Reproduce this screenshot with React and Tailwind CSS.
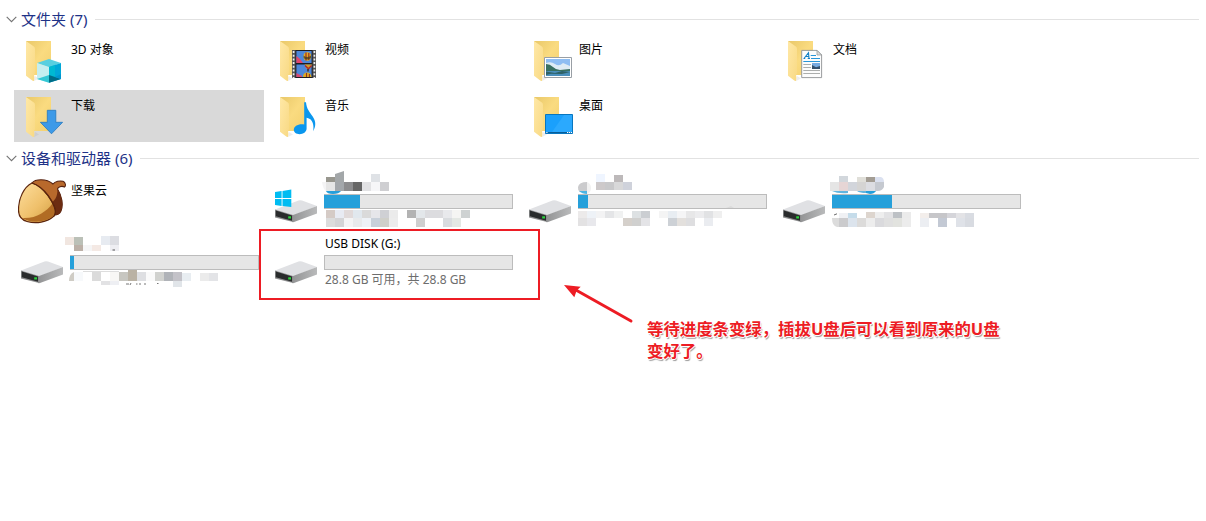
import React from "react";

const FONT = "font-['Noto_Sans','Noto_Sans_CJK_SC',sans-serif]";

function Folder({ id }) {
  return (
    <g>
      <defs>
        <linearGradient id={`b${id}`} x1="0" y1="0" x2="1" y2="1">
          <stop offset="0" stopColor="#e9c869" />
          <stop offset="0.5" stopColor="#fadb80" />
          <stop offset="1" stopColor="#f3d06f" />
        </linearGradient>
        <linearGradient id={`f${id}`} x1="0" y1="0" x2="1" y2="1">
          <stop offset="0" stopColor="#ffe8a6" />
          <stop offset="1" stopColor="#f8d984" />
        </linearGradient>
      </defs>
      <path d="M8 5H33V39H14Z" fill={`url(#b${id})`} />
      <path d="M17 40L21 42.5L16 45Z" fill="#999" opacity=".18" />
      <path d="M8 5L15.5 10.2Q17 11 17 13V37Q15.6 38.5 16.4 42L16 45Q15 45.3 13.6 44L8 39.7Z" fill={`url(#f${id})`} />
    </g>
  );
}

const overlays = {
  cube: (
    <g>
      <path d="M31 23L43 27L31 31.5L19 27Z" fill="#58cfe0" />
      <path d="M19 27L31 31V46.7L19 43Z" fill="#c5eef0" />
      <path d="M31 31L43 27V43L31 46.7Z" fill="#00a7d8" />
      <path d="M31 31L37 29V42H31Z" fill="#00b9d2" />
      <path d="M19 43L31 39V46.7Z" fill="#35c8d5" />
      <path d="M31 39L43 43L31 46.7Z" fill="#006d87" />
      <path d="M37 41L43 38V43Z" fill="#0095cf" />
    </g>
  ),
  down: (
    <path d="M29.3 18.3H37.8V30.3H44.6L33.5 41.8L22.4 30.3H29.3Z" fill="#3d9ae8" stroke="#2478bf" strokeWidth=".8" />
  ),
  film: (
    <g>
      <path d="M20 14H44V42H20Z" fill="#555" />
      <path d="M21.6 15V42M42.4 15V42" stroke="#eee" strokeWidth="1.7" strokeDasharray="2 1.7" />
      <path d="M23.4 14H40.6V42H23.4Z" fill="#1d1d22" />
      <path d="M24.4 15H39.6V27H24.4ZM24.4 28.5H39.6V41H24.4Z" fill="#4d87da" />
      <path d="M24.4 20L28 23L31 27H24.4Z" fill="#e2476b" />
      <path d="M24.4 37L30 40V41H24.4Z" fill="#d84970" />
      <ellipse cx="35.3" cy="20.5" rx="3.8" ry="4.2" fill="#e2ad22" />
      <path d="M34 16.5V24.5M36.8 17V24" stroke="#9b2d2d" strokeWidth="1.2" />
      <path d="M31.5 19.5Q35 22.5 39 19.5V22Q35 25 31.7 22Z" fill="#443b22" opacity=".75" />
      <path d="M32.5 28.5H40.3L37.5 33H34.8Z" fill="#d5a023" />
      <path d="M33 29.5L36.5 32.8L39.6 29.5" stroke="#a8282e" strokeWidth="1.3" fill="none" />
      <path d="M36 33V35.5" stroke="#492f2a" strokeWidth="1.6" />
      <path d="M31 41Q31 36.5 35 36.5T39.6 41Z" fill="#deaa1f" />
      <path d="M34.5 37V41M37.4 38V41" stroke="#8f352b" strokeWidth="1.1" />
    </g>
  ),
  music: (
    <path d="M32.2 10.3H34C34.5 17 38 20.5 40.7 24.5C44.2 29.6 43.9 34.3 41.2 39.2C42 34 41.5 27 34.6 25.8V36.5C34.6 40 31.2 42.2 27.6 42.2C24.2 42.2 21.8 40.5 21.8 37.8C21.8 34.3 26.4 31.5 32.2 32.5Z" fill="#0a97ee" />
  ),
  picture: (
    <g>
      <path d="M18.5 21.5H45.5V41.5H18.5Z" fill="#fff" stroke="#999fa5" />
      <path d="M20 23H44V40H20Z" fill="#8ebdf2" />
      <path d="M20 27Q25 25 29 28T37 27L44 30V34H20Z" fill="#deebf4" />
      <path d="M20 28Q24 28 27 31T34 34L44 33V36H20Z" fill="#397061" />
      <path d="M20 35H44V40H20Z" fill="#4b8fbb" />
      <path d="M20 35.5L29 37L36 35L44 36L36 38L25 37.8L20 39Z" fill="#2e6267" />
    </g>
  ),
  desktop: (
    <g>
      <path d="M19.5 22.5H46.5V41.5H19.5Z" fill="#1aa0fc" stroke="#0876bf" />
      <path d="M38 23H46V40H26Z" fill="#3bb1ff" opacity=".5" />
      <path d="M20 40.5H46" stroke="#075d99" />
      <path d="M20.3 40.5H21.5M41 40.5H42.3M43 40.5H44.3M45 40.5H46" stroke="#fff" />
    </g>
  ),
  document: (
    <g>
      <path d="M21.7 14.4H37L41.6 19V41.6H21.7Z" fill="#fcfcfc" stroke="#8e9294" strokeWidth=".9" />
      <path d="M37 14.4V19H41.6Z" fill="#dedede" stroke="#8e9294" strokeWidth=".7" />
      <path d="M24 22.5L28.5 16.7L29 22.5M26 20.5H29M23.5 22.5H25.2M27.7 22.5H30" stroke="#1582c7" fill="none" strokeWidth="1.1" />
      <path d="M30.7 19.5H36M31 22.5H40M23.3 25.5H40" stroke="#2795d8" />
      <path d="M23.3 28.5H31M23.3 31.5H31M23.3 34.5H40M23.3 37.5H40" stroke="#acaead" />
      <path d="M32 27H40V33H32Z" fill="#77aae0" />
      <path d="M32 29L36 31.2L40 30V33H32Z" fill="#33506c" />
    </g>
  ),
};

function FolderIcon({ kind }) {
  return (
    <svg viewBox="0 0 48 48" className="h-12 w-12 shrink-0">
      <Folder id={kind} />
      {overlays[kind]}
    </svg>
  );
}

function Acorn() {
  return (
    <svg viewBox="0 0 48 48" className="h-12 w-12 shrink-0">
      <defs>
        <linearGradient id="nut" x1="0" y1="0" x2="1" y2="1">
          <stop offset="0.1" stopColor="#fbd995" />
          <stop offset="0.55" stopColor="#efc06b" />
          <stop offset="1" stopColor="#cf9a3e" />
        </linearGradient>
      </defs>
      <path d="M14 4C17 0 28-1 35 5C37 2.500 42 1.300 45 2.300C47.800 3.500 48 7 46.500 8C43.500 6.600 40 8 39.500 10C44 17 45.500 26 43 32C41 36 38.500 36 36.500 36Z" fill="#b8692c" stroke="#54200f" strokeWidth="1.1" />
      <path d="M39.5 10C44 17 45.500 26 43 32C41.500 35.500 39 36 37 35.500C38 31 36 27 34.500 23C38 20 39.500 16 39.500 10Z" fill="#6c2c11" />
      <path d="M14 4C6 8 .5 19 .5 31C.5 38 4 41 9 42.500C18 45 29 43.500 36 37C39.500 33 35.500 24 30 16.500C25.500 10.500 20 6 14 4Z" fill="url(#nut)" stroke="#5c250d" strokeWidth="1.2" />
      <path d="M4 39C18 40 28 33 34.500 24.500C37.500 31 37.500 35 34 38C26 44 12 44 4 39Z" fill="#b16c24" />
      <path d="M14 4C20 6 25.500 10.500 30 16.500C35.500 24 39.500 33 36 37" fill="none" stroke="#5c250d" strokeWidth="1.3" />
    </svg>
  );
}

function DriveIcon({ id, windows }) {
  return (
    <svg viewBox="0 0 48 48" className="h-12 w-12 shrink-0">
      <defs>
        <linearGradient id={`s${id}`} x1="0" y1="0" x2="1" y2="0">
          <stop offset="0" stopColor="#929394" />
          <stop offset="1" stopColor="#b9babb" />
        </linearGradient>
      </defs>
      <path d="M3 30.500L26.500 21.500Q28 21 30 21.500L45 27L21 36.500Z" fill="#e0e1e4" />
      <path d="M21 36L45 27V34.500L22 43Q21 43.300 20 43Z" fill={`url(#s${id})`} />
      <path d="M3 30.500L21 36V43L3 38.500Z" fill="#8c8d8e" />
      <path d="M3.8 31.500L20 36.500V41.700L3.800 37.300Z" fill="#292b2c" />
      <path d="M16.200 37.300H19V39.500H16.200Z" fill="#2bd43c" />
      {windows && (
        <path d="M3 13L9.600 12V19H3ZM10.500 11.900L19.300 10.600V19H10.500ZM3 20H9.600V27L3 26ZM10.500 20H19.300V28L10.500 27Z" fill="#00bcf2" />
      )}
    </svg>
  );
}

/* Row format: [top, bottom, left, colours for consecutive 9px cells]; null leaves a cell clear. */
const mosaics = {
  c: {
    rows: [
      [1, 9, 67, ["#a3a7a9"]],
      [4, 9, 58, ["#98978f"]],
      [1, 9, 103, ["#dfe2e6"]],
      [9, 18, 58, ["#e6e6e6", "#a3a7ab", "#8c8c8e", "#666666", "#e2e2e4", "#f6f6f8", "#cfcfd2"]],
      [37, 45, 58, ["#d5cbc6", "#e8ebf3", "#e1dada", "#e1e8ee", "#dadada", "#e6e6ea", "#cfd0d4", "#ebebeb", null, "#b3b3b3", "#e3e7ea", "#dcdcdf", "#dcdcdf", "#e8e9ec", "#f5f5f3", "#ced2d2"]],
      [45, 54, 58, ["#dcdcdc", "#d4d4d6", "#f4f4f5", "#e8eaec", "#eef2f7", "#c8d0da", "#cfcfc9", "#ececec", null, null, "#cfcfcf", null, null, "#d9dcdf", "#e4e8e4"]],
    ],
    extra: (
      <g>
        <path d="M58 18H73Q71 21 65 21T58 18Z" fill="#259fdb" />
        <path d="M54 9H58V18Q55 16 54 9Z" fill="#f4f4f5" />
        <path d="M67 4V1L76-2V4Z" fill="#a3a7a9" />
      </g>
    ),
  },
  d: {
    rows: [
      [1, 9, 74, ["#eff5ff"]],
      [2, 9, 92, ["#bdb9ba"]],
      [9, 17, 74, ["#cdc9ca", "#c8c8ca", "#d8d8d9", "#cfd2db"]],
      [38, 45, 56, ["#eceaea", "#eef2f7", "#f3f3f4", "#e4e5e7", "#f0f1f1", null, "#dde1e3", "#cbced2", null, "#f4f4f4", "#e8edf2", "#f5f5f6", "#e7e7e8", "#ececee", "#e1e2e4", "#efefef"]],
      [45, 53, 56, ["#e3e2e3", "#e8e8ec", null, null, null, "#d5d0cb", "#d0d0cf", "#e4e4e7", null, null, "#cdd1d6", "#e3e0dd", "#dedee0", null, "#eaecf0"]],
    ],
    extra: (
      <g>
        <path d="M65 9A6.500 6.500 0 0 1 65 21Z" fill="#f1f1f1" />
        <path d="M65 9V19H58Q55.500 17 56 14Q57 9 65 9Z" fill="#cbcbcd" />
        <path d="M57 18H65V21Q60 21 57 18Z" fill="#4ab4e4" />
        <path d="M204 35H212L209 33Z" fill="#dadada" />
      </g>
    ),
  },
  e: {
    rows: [
      [3, 9, 63, ["#d2d7dc"]],
      [4, 9, 81, ["#e0dfd9", "#a39d94"]],
      [9, 18, 54, ["#e5e5e5", "#e6d5d5", "#d2d5db", "#d5d4d3", "#dcdde2"]],
      [40, 45, 63, ["#f0f1f4", "#c5dcea"]],
      [39, 45, 90, ["#ddd5ce", "#eeeeee", "#e2e2e4", "#bdc1c5", "#ebebeb"]],
      [40, 45, 144, ["#f3eeeb", "#c6c6c9", "#c6c6c9", "#d5d5da", "#e3e3e6", "#d9dce2"]],
      [45, 54, 63, ["#cbcbcd", "#dce4ed", "#dcdbda", "#ededed", "#dadadd", "#e0e0e0", "#e2e3df", "#ececec", null, "#eceef2", null, "#c3c9d4", null, "#dfe2e8", "#d8dbe1"]],
    ],
    extra: (
      <g>
        <path d="M99 4H105Q108 5 108 9H99Z" fill="#dbe1f0" />
        <path d="M99 9H108V14Q106 18 102 18H99Z" fill="#c5c9d0" />
        <path d="M56 18H72V20Q62 21 56 18Z" fill="#62b5df" />
        <path d="M81 18H90V20Q84 20 81 18Z" fill="#62b5df" />
        <path d="M90 18H100Q98 21 94 21L90 20Z" fill="#259fdb" />
        <path d="M63 45V54H61Q56 53 56 45Z" fill="#dcdcdc" />
        <path d="M58 42L61 40.800" stroke="#444" strokeWidth=".8" />
      </g>
    ),
  },
  f: {
    rows: [
      [3, 11, 51, ["#f1e6e0", "#bbc0b7"]],
      [2, 11, 87, ["#e7ebf1", "#dcdde2"]],
      [11, 17, 60, ["#bcb0a7", "#f5f5f6", "#f4e9e4", null, "#eeeef2"]],
      [38, 47, 60, ["#f7f9fb", null, "#dbdbdb", null, "#f8f7f5", "#c7c6c0", null, "#dedfe2", "#fafafa", "#d1d2cf", "#b0b3b8", "#c3c2c8"]],
      [36, 47, 114, ["#bab2a4"]],
      [39, 47, 168, ["#e8edf1", null, "#ebebeb", "#e3e4e7"]],
      [47, 51, 87, ["#e2e2e4", "#eeeff3"]],
      [47, 53, 159, ["#e1e5e9"]],
    ],
    extra: (
      <g>
        <path d="M60 38V47H55Q55 40 60 38Z" fill="#cfccc5" />
        <path d="M69 37.500H105" stroke="#ddd" />
        <path d="M98.500 16H101" stroke="#555" />
        <path d="M112 50H115M117 49L116 51M122 50H123.500M126 49V51M130 50H132M143 49.500H144.500" stroke="#777" />
      </g>
    ),
  },
};

function Mosaic({ name }) {
  const { rows, extra } = mosaics[name];
  return (
    <svg width="250" height="57" className="absolute left-0 top-0 overflow-visible" shapeRendering="crispEdges">
      {rows.map(([top, bottom, left, cells], r) =>
        cells.map((fill, i) =>
          fill ? <rect key={`${r}-${i}`} x={left + i * 9} y={top} width="9" height={bottom - top} fill={fill} /> : null
        )
      )}
      <g shapeRendering="auto">{extra}</g>
    </svg>
  );
}

function SectionHeader({ title }) {
  return (
    <div className="flex h-5 items-center pl-[6px] pr-[7px]">
      <svg viewBox="0 0 11 7" className="h-[7px] w-[11px] shrink-0">
        <path d="M.7 .8L5.500 5.600L10.300 .8" fill="none" stroke="#737373" strokeWidth="1.1" />
      </svg>
      <h2 className="ml-1 whitespace-nowrap text-[15px] leading-5 text-[#1e3287]">{title}</h2>
      <div className="ml-2 h-px flex-1 bg-[#e2e2e2]" />
    </div>
  );
}

function FolderTile({ kind, label, active }) {
  return (
    <div className={`flex h-[52px] gap-[5px] pl-1 pt-[2px] ${active ? "bg-[#d9d9d9]" : ""}`}>
      <FolderIcon kind={kind} />
      <span className="pt-[6px] text-xs leading-4">{label}</span>
    </div>
  );
}

function DriveTile({ id, windows, fill, name, detail, mosaic }) {
  return (
    <div className="relative flex h-[57px] gap-1 pl-1">
      <div className="pt-[6px]">
        <DriveIcon id={id} windows={windows} />
      </div>
      <div className="flex w-[189px] shrink-0 flex-col">
        <div className="h-[21px] whitespace-nowrap pl-px pt-[2px] text-xs leading-4">{name}</div>
        <div className="h-[15px] border border-[#bcbcbc] bg-[#e6e6e6]">
          <div className="-ml-px h-[13px] bg-[#26a0da]" style={{ width: fill }} />
        </div>
        <div className="whitespace-nowrap pl-px pt-[2px] text-xs leading-4 text-[#6d6d6d]">{detail}</div>
      </div>
      {mosaic && <Mosaic name={mosaic} />}
    </div>
  );
}

export default function App() {
  return (
    <main className={`relative h-[521px] w-[1206px] overflow-hidden bg-white text-black ${FONT}`}>
      <section className="pt-[9px]">
        <SectionHeader title="文件夹 (7)" />
        <div className="mt-[5px] grid grid-cols-[repeat(4,250px)] gap-1 pl-[14px]">
          <FolderTile kind="cube" label="3D 对象" />
          <FolderTile kind="film" label="视频" />
          <FolderTile kind="picture" label="图片" />
          <FolderTile kind="document" label="文档" />
          <FolderTile kind="down" label="下载" active />
          <FolderTile kind="music" label="音乐" />
          <FolderTile kind="desktop" label="桌面" />
        </div>
      </section>
      <section className="pt-[6px]">
        <SectionHeader title="设备和驱动器 (6)" />
        <div className="mt-[5px] grid grid-cols-[repeat(4,250px)] gap-1 pl-[14px]">
          <div className="flex h-[57px] gap-[5px] pl-1 pt-[6px]">
            <Acorn />
            <span className="pt-1 text-xs leading-4">坚果云</span>
          </div>
          <DriveTile id="c" windows fill={36} mosaic="c" />
          <DriveTile id="d" fill={10} mosaic="d" />
          <DriveTile id="e" fill={60} mosaic="e" />
          <DriveTile id="f" fill={4} mosaic="f" />
          <DriveTile id="g" fill={0} name="USB DISK (G:)" detail="28.8 GB 可用，共 28.8 GB" />
        </div>
      </section>
      <div className="absolute left-[259px] top-[229px] h-[71px] w-[281px] border-2 border-[#ed1c24]" />
      <svg viewBox="0 0 72 42" className="absolute left-[562px] top-[282px] h-[42px] w-[72px]">
        <path d="M13 7.500L69 39" stroke="#ed1c24" strokeWidth="3" strokeLinecap="round" />
        <path d="M2 3L18.700 4.700L14.700 8.500L12.300 15.300Z" fill="#ed1c24" />
      </svg>
      <p className="absolute left-[647px] top-[318px] whitespace-nowrap text-[16.4px] font-bold leading-[22px] text-[#ed1c24] [text-shadow:0_0_2px_#fff,1px_0_0_#fff,-1px_0_0_#fff,0_1px_0_#fff,1px_2px_1px_#999]">
        等待进度条变绿，插拔U盘后可以看到原来的U盘
        <br />
        变好了。
      </p>
    </main>
  );
}
